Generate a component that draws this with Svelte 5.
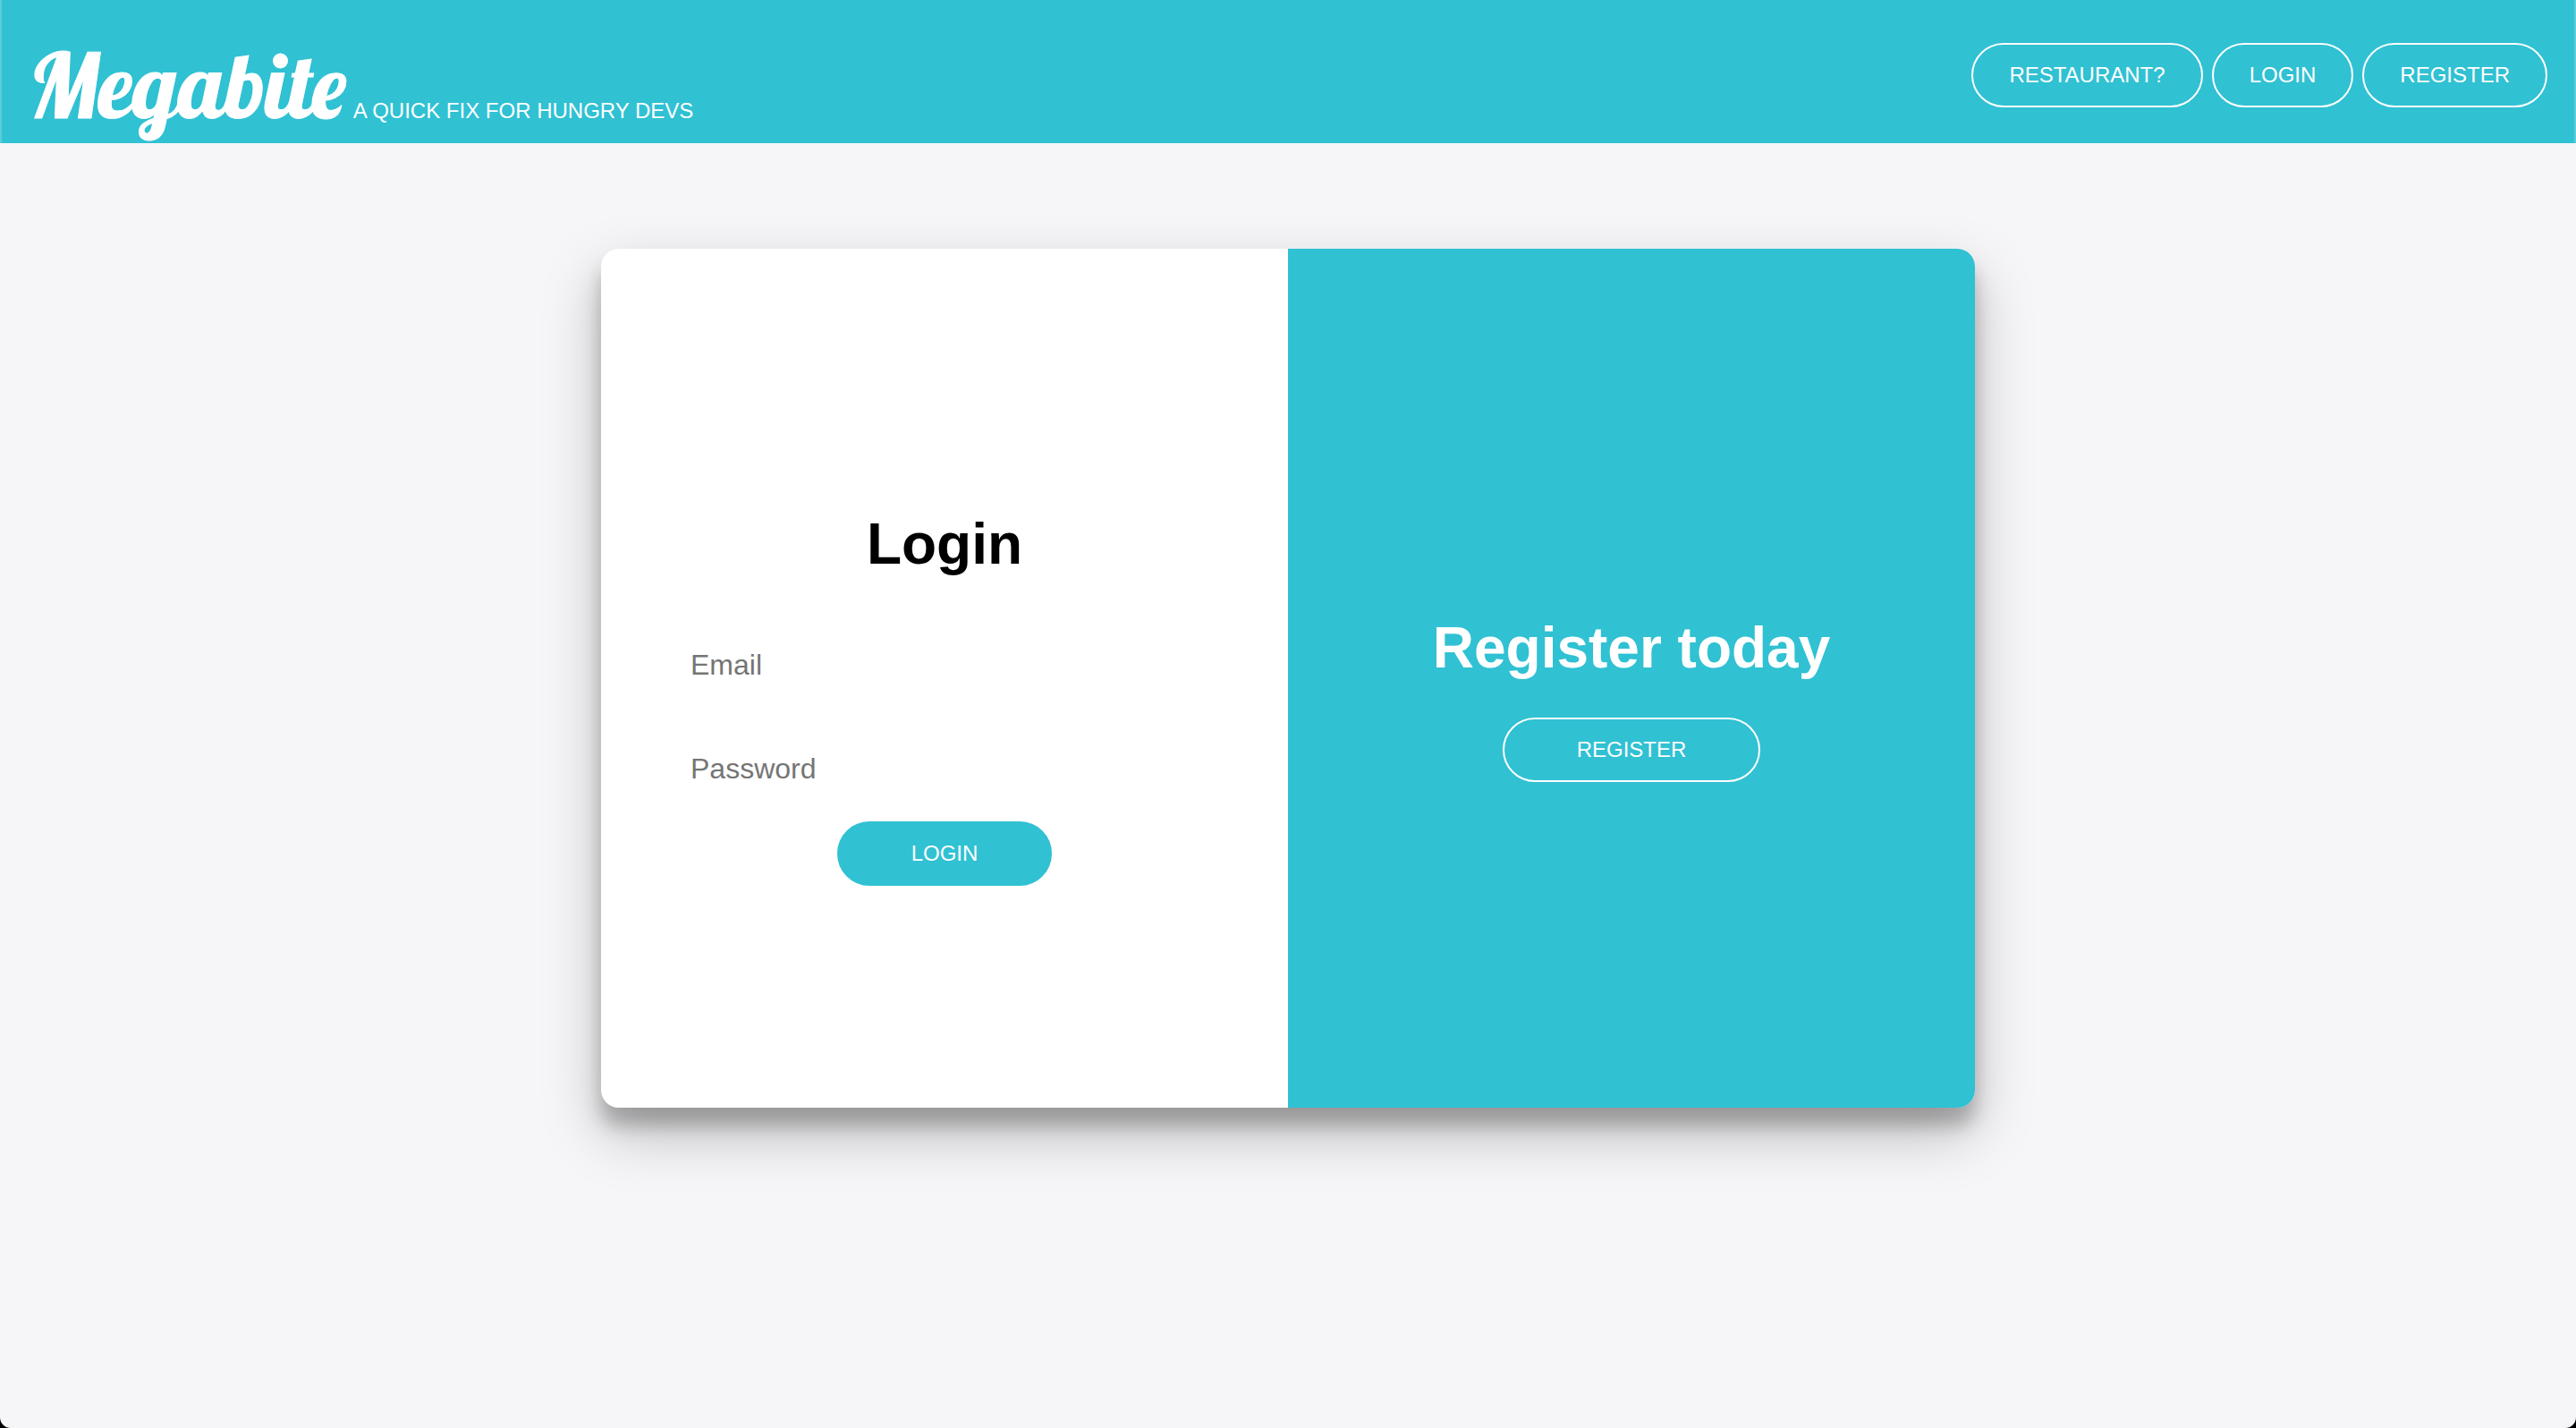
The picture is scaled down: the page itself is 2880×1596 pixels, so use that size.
<script>
  const navItems = ['Restaurant?', 'Login', 'Register'];
  let email = $state('');
  let password = $state('');
</script>

<div class="page">
  <header>
    <a class="brand" href="#home">
      <span class="logo">Megabite</span>
      <span class="tagline">A quick fix for hungry devs</span>
    </a>
    <nav>
      {#each navItems as item}
        <button type="button" class="pill">{item}</button>
      {/each}
    </nav>
  </header>

  <main>
    <div class="card">
      <form class="panel" onsubmit={(e) => e.preventDefault()}>
        <h1>Login</h1>
        <input type="email" aria-label="Email" placeholder="Email" bind:value={email} />
        <input type="password" aria-label="Password" placeholder="Password" bind:value={password} />
        <button type="submit" class="pill wide solid">Login</button>
      </form>
      <section class="panel accent">
        <h1>Register today</h1>
        <button type="button" class="pill wide">Register</button>
      </section>
    </div>
  </main>
</div>

<style>
  :global(body) {
    margin: 0;
    background: #000;
  }
  .page {
    --teal: #30c1d3;
    box-sizing: border-box;
    min-height: 100vh;
    display: flex;
    flex-direction: column;
    background: #f6f6f8;
    border-radius: 0 0 12px 12px;
    font-family: Helvetica, 'Liberation Sans', Arial, sans-serif;
  }
  header {
    box-sizing: border-box;
    min-height: 160px;
    display: flex;
    justify-content: space-between;
    align-items: flex-start;
    padding: 48px 32px 0;
    background: var(--teal);
    box-shadow: inset 2px 0 #57cddb, inset -2px 0 #57cddb;
  }
  .brand {
    display: flex;
    align-items: baseline;
    gap: 8px;
    color: #fff;
    text-decoration: none;
  }
  .logo {
    font: 100px/94px Lobster, 'Liberation Serif', serif;
    -webkit-text-stroke: 1px #fff;
  }
  .tagline {
    font-size: 24px;
    line-height: 28px;
    text-transform: uppercase;
  }
  nav {
    display: flex;
    gap: 10px;
  }
  .pill {
    border: 2px solid #fff;
    border-radius: 40px;
    padding: 20px 40px;
    background: transparent;
    color: #fff;
    font-family: inherit;
    font-size: 24px;
    line-height: 28px;
    text-transform: uppercase;
    cursor: pointer;
  }
  .wide {
    padding: 20px 81px;
  }
  .solid {
    border-color: var(--teal);
    background: var(--teal);
  }
  main {
    display: flex;
    justify-content: center;
    padding: 118px 32px;
  }
  .card {
    width: 100%;
    max-width: 1536px;
    min-height: 960px;
    display: grid;
    grid-template-columns: 1fr 1fr;
    border-radius: 20px;
    overflow: hidden;
    background: #fff;
    box-shadow: 0 28px 64px rgba(0, 0, 0, 0.25), 0 20px 20px rgba(0, 0, 0, 0.22);
  }
  .panel {
    display: flex;
    flex-direction: column;
    align-items: center;
    justify-content: center;
    padding: 0 70px;
  }
  .accent {
    background: var(--teal);
    color: #fff;
  }
  h1 {
    margin: 46px 0 42px;
    font-size: 64px;
    line-height: 72px;
    font-weight: bold;
  }
  input {
    box-sizing: border-box;
    width: 100%;
    height: 84px;
    margin: 16px 0;
    padding: 23px 30px 25px;
    border: 0;
    background: #fff;
    font-family: inherit;
    font-size: 32px;
  }
  input::placeholder {
    color: #757575;
  }
</style>
